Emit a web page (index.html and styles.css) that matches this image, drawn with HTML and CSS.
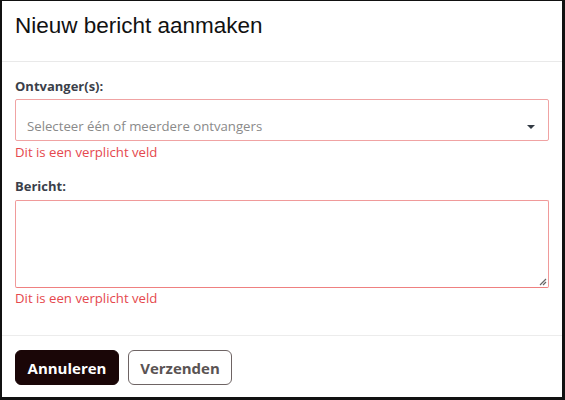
FILE: index.html
```html
<!DOCTYPE html>
<html lang="nl">
<head>
<meta charset="utf-8">
<title>Nieuw bericht aanmaken</title>
<link rel="stylesheet" href="styles.css">
</head>
<body>
<div class="modal">
  <div class="modal-header">
    <h1 class="title">Nieuw bericht aanmaken</h1>
  </div>
  <div class="modal-body">
    <div class="field">
      <label class="label">Ontvanger(s):</label>
      <div class="select">
        <span class="placeholder">Selecteer één of meerdere ontvangers</span>
        <span class="caret"></span>
      </div>
      <div class="error">Dit is een verplicht veld</div>
    </div>
    <div class="field field-second">
      <label class="label label-second">Bericht:</label>
      <div class="textarea">
        <svg class="grip" width="9" height="9" viewBox="0 0 9 9"><path d="M8 2 L2 8 M8 5 L5 8" stroke="#666" stroke-width="1.2" fill="none"/></svg>
      </div>
      <div class="error error-second">Dit is een verplicht veld</div>
    </div>
  </div>
  <div class="modal-footer">
    <button class="btn btn-dark">Annuleren</button>
    <button class="btn btn-outline">Verzenden</button>
  </div>
</div>
</body>
</html>
```
FILE: styles.css
```css
html, body {
  margin: 0;
  padding: 0;
  background: #fff;
}
.modal {
  box-sizing: border-box;
  width: 565px;
  height: 400px;
  border-style: solid;
  border-color: #111;
  border-width: 1px 3px 3px 2px;
  background: #fff;
  display: flex;
  flex-direction: column;
  font-family: "Open Sans", sans-serif;
}
.modal-header {
  height: 61px;
  flex: none;
  box-sizing: border-box;
  padding: 10px 13px 0;
  border-bottom: 1px solid #e9e9e9;
}
.title {
  margin: 0;
  font-family: "Liberation Sans", Arial, sans-serif;
  font-weight: normal;
  font-size: 22.5px;
  line-height: 30px;
  color: #111;
}
.modal-body {
  flex: none;
  padding: 15px 13px 0;
  height: 274px;
  box-sizing: border-box;
  border-bottom: 1px solid #ececec;
}
.field-second {
  margin-top: 16px;
}
.label {
  display: block;
  font-size: 13px;
  font-weight: 700;
  line-height: 18px;
  color: #3b3f4a;
  margin-bottom: 4px;
}
.label-second {
  margin-bottom: 5px;
}
.select {
  box-sizing: border-box;
  height: 42px;
  border: 1px solid #f0a3a3;
  border-radius: 2px;
  display: flex;
  align-items: center;
  justify-content: space-between;
  padding: 12px 13px 0 11px;
}
.placeholder {
  font-size: 13.2px;
  color: #8a8a8a;
}
.caret {
  width: 0;
  height: 0;
  border-left: 4px solid transparent;
  border-right: 4px solid transparent;
  border-top: 4px solid #333a44;
  margin-top: 1px;
}
.textarea {
  box-sizing: border-box;
  height: 88px;
  border: 1px solid #f09a9a;
  border-bottom-color: #ef8080;
  border-radius: 2px;
  position: relative;
}
.grip {
  position: absolute;
  right: 1px;
  bottom: 1px;
}
.error {
  font-size: 13.2px;
  line-height: 18px;
  color: #e5484d;
  margin-top: 2px;
}
.error-second {
  margin-top: 1px;
}
.modal-footer {
  padding: 14px 13px 0;
  display: flex;
  gap: 9px;
}
.btn {
  box-sizing: border-box;
  height: 35px;
  width: 104px;
  border-radius: 6px;
  font-family: "Open Sans", sans-serif;
  font-weight: 700;
  font-size: 15px;
  padding: 0;
  cursor: pointer;
}
.btn-dark {
  background: #1a0607;
  color: #fff;
  border: 1px solid #1a0607;
}
.btn-outline {
  background: #fff;
  color: #5a5353;
  border: 1.5px solid #6e6464;
}
```
